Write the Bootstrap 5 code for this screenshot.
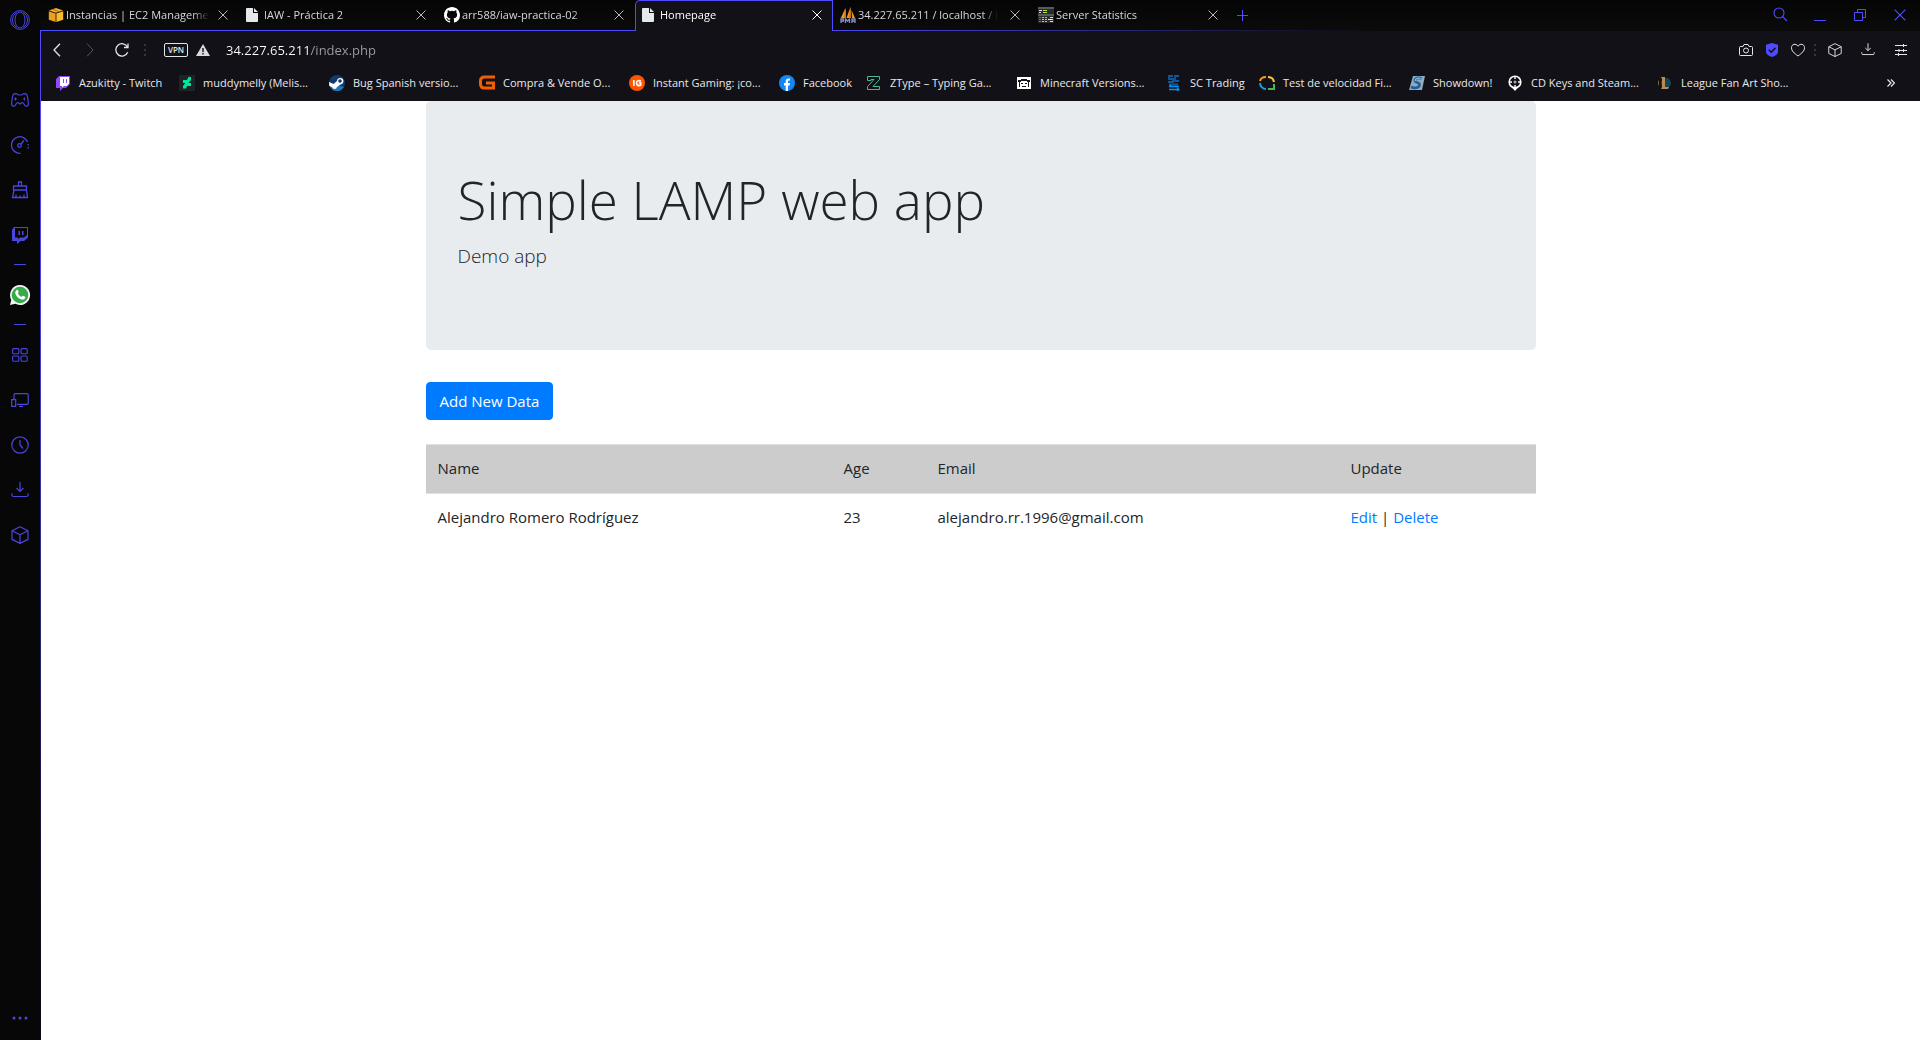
<!DOCTYPE html>
<html lang="es">
<head>
<meta charset="utf-8">
<meta name="viewport" content="width=device-width, initial-scale=1">
<title>Homepage</title>
<link href="https://cdn.jsdelivr.net/npm/bootstrap@5.3.0/dist/css/bootstrap.min.css" rel="stylesheet">
<style>
:root { --line: #4f4bff; --bar: #121117; --dark: #070708; }
body { font-family: "Open Sans", "Noto Sans", sans-serif; font-size: 15px; line-height: 24px; color: #212529; background: #fff; }
svg { display: block; flex: none; }
button.plain { background: none; border: 0; padding: 0; color: inherit; display: flex; align-items: center; justify-content: center; }
.stroke { fill: none; stroke: currentColor; }

/* side bar */
.side { width: 41px; flex: none; background: var(--dark); color: #4a46e0; position: relative; }
.side::after { content: ""; position: absolute; right: 0; top: 30px; bottom: 0; width: 1px; background: linear-gradient(var(--line) 0, #4844e8 250px, #2c2a80 560px, #0a0a14 950px); }
.side .plain, .side a { width: 40px; height: 45px; display: flex; align-items: center; justify-content: center; color: inherit; }
.side .logo { height: 40px; margin-bottom: 37px; }
.side .sep { width: 12px; height: 1px; background: currentColor; margin: 7px 14px; opacity: 1; border: 0; }

/* tabs */
.tabstrip { height: 31px; background: linear-gradient(90deg, var(--line) 0, var(--line) 750px, transparent 1330px) bottom / 100% 1px no-repeat, linear-gradient(#050506, #0b0b0c); color: #d5d6da; }
.tabx { width: 198px; height: 31px; padding: 0 9px 1px 7px; gap: 2px; font-size: 11px; line-height: 16px; }
.tabx a { color: inherit; text-decoration: none; min-width: 0; gap: 2px; }
.tabx .ttl { white-space: nowrap; overflow: hidden; -webkit-mask-image: linear-gradient(90deg, #000 calc(100% - 16px), transparent); mask-image: linear-gradient(90deg, #000 calc(100% - 16px), transparent); }
.tabx .plain { width: 14px; height: 16px; flex: none; color: #b9babd; }
.tabx.on { background: var(--bar); border: 1px solid var(--line); border-bottom: 0; border-top-left-radius: 5px; color: #fff; padding: 0 8px 2px 6px; }
.tabx.on .plain { color: #fff; }
button.newtab { width: 26px; height: 30px; color: var(--line); }
.wins { color: var(--line); height: 30px; padding-right: 8px; gap: 16px; }
.wins .plain { width: 24px; height: 30px; }

/* toolbar and bookmarks */
.tools { background: var(--bar); color: #e4e5e8; height: 39px; padding: 0 3px 2px 3px; }
.tools .plain { height: 30px; flex: none; }
.w34 { width: 34px; } .w26 { width: 26px; } .w32 { width: 32px; }
.tools .dim { color: #55565c; }
.tools .vpn { background: none; color: inherit; border: 1px solid #e4e5e8; border-radius: 2px; width: 24px; height: 14px; flex: none; padding: 0; font-size: 8px; line-height: 12px; text-align: center; font-weight: 600; }
.addr { border: 0; background: linear-gradient(90deg, #fff 84px, #9a9ea8 84px); -webkit-background-clip: text; background-clip: text; color: #fff; -webkit-text-fill-color: transparent; font-size: 13px; line-height: 20px; padding: 0; outline: 0; min-width: 0; }
.marks { background: var(--bar); height: 31px; padding: 0 12px 6px 14px; color: #e8e9eb; font-size: 11px; line-height: 16px; }
.marklist { display: grid; grid-template-columns: 124px repeat(4, 150px) 87px 150px 150px 93px 150px 98px 150px 150px; }
.marklist a { color: inherit; text-decoration: none; display: flex; align-items: center; gap: 8px; white-space: nowrap; }

/* page */
.container { max-width: 1140px; padding-left: 15px; padding-right: 15px; }
.jumbo { background: #e9ecef; border-radius: 5px; padding: 65px 32px 63px; margin-bottom: 32px; }
.jumbo h1 { font-size: 53px; font-weight: 300; line-height: 67px; margin-bottom: 8px; }
.jumbo p { font-size: 19px; font-weight: 300; line-height: 30px; margin-bottom: 16px; }
.btn-add { background: #007bff; border-color: #007bff; color: #fff; font-size: 15px; line-height: 24px; padding: 6px 13px; border-radius: 4px; margin-bottom: 24px; }
.people { table-layout: fixed; width: 100%; }
.people th, .people td { padding: 11px 12px 13px; border-top: 1px solid #dee2e6; font-weight: 400; text-align: left; }
.people thead { background: #ccc; }
.people a { color: #007bff; text-decoration: none; }
.c1 { width: 37%; } .c2 { width: 94px; } .c3 { width: 413px; } .c4 { width: 197px; }
</style>
<script src="https://cdn.jsdelivr.net/npm/bootstrap@5.3.0/dist/js/bootstrap.bundle.min.js"></script>
</head>
<body>
<svg width="0" height="0" class="position-absolute top-0" aria-hidden="true">
  <symbol id="x" viewBox="0 0 10 10"><path class="stroke" d="M.5.5l9 9M9.5.5l-9 9"/></symbol>
  <symbol id="page" viewBox="0 0 12 14"><path fill="#e6e9ec" d="M1 0h6v5h5v8a1 1 0 0 1-1 1H1a1 1 0 0 1-1-1V1a1 1 0 0 1 1-1zM8 0l4 4H8z"/></symbol>
  <symbol id="cube" viewBox="0 0 18 18"><path class="stroke" stroke-width="1.200" stroke-linejoin="round" d="M9 .8l8 4v8.6l-8 4-8-4V4.800zM1 4.800l8 4 8-4M9 8.800v8.600"/></symbol>
  <symbol id="down" viewBox="0 0 18 16"><path class="stroke" stroke-width="1.200" d="M9 0v9.500M5.500 6L9 9.500 12.500 6M1 11.500v1.500a1.500 1.500 0 0 0 1.500 1.500h13a1.500 1.500 0 0 0 1.500-1.500v-1.500"/></symbol>
  <symbol id="grip" viewBox="0 0 2 12"><path fill="#37363d" d="M0 0h2v2H0zM0 5h2v2H0zM0 10h2v2H0z"/></symbol>
</svg>
<div class="d-flex min-vh-100">
  <nav class="side d-flex flex-column" aria-label="Barra lateral">
    <button class="plain logo" aria-label="Opera"><svg width="20" height="20" viewBox="0 0 20 20"><g class="stroke"><circle cx="10" cy="10" r="9.400"/><ellipse cx="10" cy="10" rx="5" ry="8"/><path d="M7 2.500c-6 3-6 12 0 15M13 2.500c6 3 6 12 0 15"/></g></svg></button>
    <button class="plain" aria-label="GX Corner"><svg width="18" height="14" viewBox="0 0 18 14"><path class="stroke" stroke-width="1.200" d="M5 .7c-3 0-3.300 1-3.600 4C1 7 .6 9 .6 11c0 2.600 2.500 2.800 3.600 1.400C5.200 11 5.500 9.500 7 9.500L9 11l2-1.500c1.500 0 1.800 1.500 2.800 2.900 1.100 1.400 3.600 1.200 3.600-1.400 0-2-.4-4-.8-6.300-.3-3-.6-4-3.600-4-1.500 0-1.500 1.300-2.500 1.300h-3C6.500 2 6.500.7 5 .7z"/><path fill="currentColor" d="M4 4.500h1v1h1v1H5v1H4v-1H3v-1h1zM12 5.500h2v1h-2zM13 4.500h1v3h-1z"/></svg></button>
    <button class="plain" aria-label="GX Control"><svg width="18" height="18" viewBox="0 0 18 18"><g class="stroke" stroke-width="1.300"><path d="M9.500 17.300A8.300 8.300 0 1 1 16.500 6"/><path stroke-dasharray="1.500 1.500" d="M17.200 8v6"/><circle cx="8.500" cy="9.500" r="1.800"/><path d="M10 8l3-3.500"/></g></svg></button>
    <button class="plain" aria-label="GX Cleaner"><svg width="18" height="18" viewBox="0 0 18 18"><path class="stroke" stroke-width="1.300" d="M7.500 5V1h3v4M2.500 5h13v4h-13zM3 9l-1.500 7.500h15L15.500 9M5 16.500v-3M9 16.500v-2M13 16.500v-3"/></svg></button>
    <button class="plain" aria-label="Twitch"><svg width="18" height="18" viewBox="0 0 18 18"><path fill="currentColor" fill-rule="evenodd" d="M3 1h14v10.500L13 15h-3.500L6 18v-3H1V4zm1 1v9.500h3v1.800l2-1.800h4l3-2.500V2zM7.500 5H9v4H7.500zM11 5h1.500v4H11z"/></svg></button>
    <hr class="sep">
    <button class="plain" aria-label="WhatsApp"><svg width="20" height="20" viewBox="0 0 20 20"><path fill="#f3f6f3" d="M10 0a10 10 0 1 1-4.700 18.800L0 20l1.300-5.100A10 10 0 0 1 10 0z"/><circle cx="10" cy="10" r="8.300" fill="#35ab49"/><path fill="#fff" d="M6.300 5.200c.8-.9 1.500-.6 1.800.2l.5 1.400c.1.500-.2.800-.8 1.400.9 1.800 2 2.800 3.900 3.700.8-1 1.100-1.300 1.600-1l1.500.7c.8.400.6 1 .3 1.700-.8 1.500-2.900 1.600-4.500.9-2.500-1-4-2.600-5-4.900-.6-1.500-.4-2.900.7-4.100z"/></svg></button>
    <hr class="sep">
    <button class="plain" aria-label="Marcación rápida"><svg width="16" height="14" viewBox="0 0 16 14"><g class="stroke" stroke-width="1.100"><rect x=".6" y=".6" width="6.200" height="5.200" rx="1"/><rect x="9" y=".6" width="6.200" height="5.200" rx="1"/><rect x=".6" y="8" width="6.200" height="5.200" rx="1"/><rect x="9" y="8" width="6.200" height="5.200" rx="1"/></g></svg></button>
    <button class="plain" aria-label="Mi Flow"><svg width="18" height="14" viewBox="0 0 18 14"><path class="stroke" stroke-width="1.200" d="M3 6V2a1.300 1.300 0 0 1 1.300-1.300h11.600A1.300 1.300 0 0 1 17.200 2v8a1.300 1.300 0 0 1-1.300 1.300H6M.7 6.700h4v6.600h-4zM8 13.300h4"/></svg></button>
    <button class="plain" aria-label="Historial"><svg width="18" height="18" viewBox="0 0 18 18"><g class="stroke" stroke-width="1.200"><circle cx="9" cy="9" r="8.200"/><path d="M9 4v5l3 3.500"/></g></svg></button>
    <a href="#" aria-label="Descargas"><svg width="18" height="16"><use href="#down"/></svg></a>
    <button class="plain" aria-label="Extensiones"><svg width="18" height="18"><use href="#cube"/></svg></button>
    <button class="plain mt-auto" aria-label="Más"><svg width="16" height="4" viewBox="0 0 16 4"><g fill="currentColor"><circle cx="2" cy="2" r="1.500"/><circle cx="8" cy="2" r="1.500"/><circle cx="14" cy="2" r="1.500"/></g></svg></button>
  </nav>

  <div class="flex-grow-1">
    <header>
      <div class="tabstrip d-flex">
        <div class="tabx d-flex align-items-center"><a href="#" class="d-flex align-items-center flex-grow-1"><svg width="16" height="16" viewBox="0 0 16 16"><path fill="#f6b02c" d="M8 1l7 2.500-7 2.300L1 3.500z"/><path fill="#e8a020" d="M.8 4.200L7.700 6.500V15L.8 12.800z"/><path fill="#f9b931" d="M8.300 6.500l6.900-2.300v8.600L8.300 15z"/><path stroke="#7d500c" d="M4.500 2.300l7 2.500M8 6v9" stroke-width=".7"/></svg><span class="ttl">Instancias | EC2 Manageme</span></a><button class="plain" aria-label="Cerrar"><svg width="10" height="10"><use href="#x"/></svg></button></div>
        <div class="tabx d-flex align-items-center"><a href="#" class="d-flex align-items-center flex-grow-1"><svg width="16" height="14"><use href="#page" width="12" height="14"/></svg><span class="ttl">IAW - Práctica 2&emsp;&emsp;</span></a><button class="plain" aria-label="Cerrar"><svg width="10" height="10"><use href="#x"/></svg></button></div>
        <div class="tabx d-flex align-items-center"><a href="#" class="d-flex align-items-center flex-grow-1"><svg width="16" height="16" viewBox="0 0 16 16"><path fill="#fff" d="M8 0C3.580 0 0 3.580 0 8c0 3.540 2.290 6.530 5.470 7.590.4.070.55-.17.55-.38 0-.19-.01-.82-.01-1.490-2.010.37-2.530-.49-2.690-.94-.09-.23-.48-.94-.82-1.130-.28-.15-.68-.52-.01-.53.63-.01 1.080.58 1.230.82.720 1.210 1.870.87 2.330.66.070-.52.280-.87.510-1.070-1.780-.2-3.640-.89-3.640-3.950 0-.87.310-1.590.82-2.150-.08-.2-.36-1.020.080-2.120 0 0 .67-.21 2.200.82a7.600 7.600 0 0 1 4 0c1.530-1.040 2.200-.82 2.200-.82.440 1.100.160 1.920.080 2.120.510.560.820 1.270.820 2.150 0 3.070-1.870 3.750-3.650 3.950.290.250.540.730.540 1.480 0 1.070-.010 1.930-.010 2.200 0 .210.150.460.550.380A8 8 0 0 0 16 8c0-4.420-3.580-8-8-8z"/></svg><span class="ttl">arr588/iaw-practica-02&emsp;</span></a><button class="plain" aria-label="Cerrar"><svg width="10" height="10"><use href="#x"/></svg></button></div>
        <div class="tabx on d-flex align-items-center"><a href="#" class="d-flex align-items-center flex-grow-1"><svg width="16" height="14"><use href="#page" width="12" height="14"/></svg><span class="ttl">Homepage&emsp;&emsp;</span></a><button class="plain" aria-label="Cerrar"><svg width="10" height="10"><use href="#x"/></svg></button></div>
        <div class="tabx d-flex align-items-center"><a href="#" class="d-flex align-items-center flex-grow-1"><svg width="16" height="16" viewBox="0 0 16 16"><path fill="#f7941d" d="M5.500 1L6 11H.8zM10.500 0l.5 11H6.500zM11.500 3l3.500 8h-3z"/><path fill="#c9731b" d="M5.500 1L6 11H4zM10.500 0l.5 11H9z"/><path fill="none" stroke="#8a8ec0" stroke-width="1.300" d="M1 16v-4h2.500v2H1M5.500 16v-4L7.500 14l2-2v4M12 16v-4h3v4M12 14h3"/></svg><span class="ttl">34.227.65.211 / localhost / l</span></a><button class="plain" aria-label="Cerrar"><svg width="10" height="10"><use href="#x"/></svg></button></div>
        <div class="tabx d-flex align-items-center"><a href="#" class="d-flex align-items-center flex-grow-1"><svg width="16" height="16" viewBox="0 0 16 16"><path fill="#2b2b2b" d="M0 0h16v16H0z"/><path fill="#5a5a5a" d="M0 0h16v2H0zM0 7h16v2H0z"/><path fill="#ddd" d="M1 3h3v1H1zM1 5h2v1H1zM12 10h3v1h-3zM10 12h5v1h-5zM12 14h3v1h-3z"/><path fill="#a6e22e" d="M5 3h4v1H5zM5 5h4v1H5zM4 10h2v1H4zM4 12h2v1H4zM4 14h2v1H4z"/><path fill="#f92672" d="M1 10h2v1H1zM1 12h2v1H1zM1 14h2v1H1z"/><path fill="#66d9ef" d="M7 10h2v1H7zM7 12h2v1H7zM7 14h2v1H7z"/></svg><span class="ttl">Server Statistics&emsp;&emsp;</span></a><button class="plain" aria-label="Cerrar"><svg width="10" height="10"><use href="#x"/></svg></button></div>
        <button class="plain newtab" aria-label="Nueva pestaña"><svg width="11" height="11" viewBox="0 0 11 11"><path class="stroke" d="M5.500 0v11M0 5.500h11"/></svg></button>
        <div class="wins d-flex ms-auto">
          <button class="plain" aria-label="Buscar"><svg width="16" height="16" viewBox="0 0 16 16"><g class="stroke" stroke-width="1.100"><circle cx="7" cy="6" r="5"/><path d="M10.500 9.500l4.500 4.500"/></g></svg></button>
          <button class="plain" aria-label="Minimizar"><svg width="12" height="12" viewBox="0 0 12 12"><path class="stroke" d="M0 11.500h12"/></svg></button>
          <button class="plain" aria-label="Restaurar"><svg width="12" height="12" viewBox="0 0 12 12"><path class="stroke" d="M.5 3.500h8v8h-8zM3.500 3.500v-3h8v8h-3"/></svg></button>
          <button class="plain" aria-label="Cerrar ventana"><svg width="12" height="12"><use href="#x"/></svg></button>
        </div>
      </div>

      <div class="tools d-flex align-items-center">
        <button class="plain w26" aria-label="Atrás"><svg width="8" height="14" viewBox="0 0 8 14"><path class="stroke" stroke-width="1.300" d="M7 .7L1 7l6 6.300"/></svg></button>
        <button class="plain w32 ms-1 dim" aria-label="Adelante"><svg width="8" height="14" viewBox="0 0 8 14"><path class="stroke" d="M1 .7L7 7l-6 6.300"/></svg></button>
        <button class="plain w32" aria-label="Recargar"><svg width="14" height="14" viewBox="0 0 14 14"><path class="stroke" stroke-width="1.300" d="M12.700 9.300A6.200 6.200 0 1 1 12.500 4M13 .5v4H9"/></svg></button>
        <svg width="18" height="12"><use href="#grip" width="2" height="12" x="6"/></svg>
        <button class="vpn ms-2 me-2">VPN</button>
        <svg width="14" height="12" viewBox="0 0 14 12"><path fill="#d9dbdf" d="M7 0l7 12H0z"/><path fill="#121117" d="M6.300 4h1.400v4H6.300zM6.300 9h1.400v1.400H6.300z"/></svg>
        <input class="addr flex-grow-1 ms-3" type="text" aria-label="Dirección" value="34.227.65.211/index.php">
        <button class="plain w26" aria-label="Captura"><svg width="14" height="14" viewBox="0 0 14 14"><g class="stroke"><path d="M1.500 3.500H4l1-2h4l1 2h2.500a1 1 0 0 1 1 1v7a1 1 0 0 1-1 1h-11a1 1 0 0 1-1-1v-7a1 1 0 0 1 1-1z"/><circle cx="7" cy="7.500" r="2.500"/></g></svg></button>
        <button class="plain w26" aria-label="Bloqueador"><svg width="12" height="14" viewBox="0 0 12 14"><path fill="#4f4bff" d="M6 0l6 1.800v6.700C12 11.500 9 13 6 14 3 13 0 11.500 0 8.500V1.800z"/><path fill="none" stroke="#121117" stroke-width="1.600" d="M2.800 6.800l2.400 2.400 4.200-4.300"/></svg></button>
        <button class="plain w26" aria-label="Favoritos"><svg width="14" height="14" viewBox="0 0 14 14"><path class="stroke" d="M7 13C3 10 .5 8 .5 4.700.5 1 5 0 7 3.200 9 0 13.500 1 13.500 4.700 13.500 8 11 10 7 13z"/></svg></button>
        <svg width="8" height="12"><use href="#grip" width="2" height="12" x="3"/></svg>
        <button class="plain w32" aria-label="Extensiones"><svg width="14" height="14"><use href="#cube"/></svg></button>
        <button class="plain w34" aria-label="Descargas"><svg width="14" height="13"><use href="#down"/></svg></button>
        <button class="plain w32" aria-label="Configuración"><svg width="12" height="12" viewBox="0 0 12 12"><path class="stroke" d="M0 1.500h12M0 6.500h12M0 10.500h12M8.500 0v3M4 5v3M8.500 5v3M3.500 9v3"/></svg></button>
      </div>

      <nav class="marks d-flex align-items-center" aria-label="Marcadores">
        <div class="marklist">
          <a href="#"><svg width="16" height="16" viewBox="0 0 16 16"><path fill="#9146ff" d="M4 1h11v8l-4 4H8l-3 3v-3H1V4z"/><path fill="#fff" d="M5 2h9v6.500L12 11H9l-2 1.500V11H5z"/><path fill="#9146ff" d="M8 4h1v4H8zM11 4h1v4h-1z"/></svg>Azukitty - Twitch</a>
          <a href="#"><svg width="16" height="16" viewBox="0 0 16 16"><path fill="#1d2428" d="M0 0h16v16H0z"/><path fill="#00e59b" d="M12 2v3L9.500 8H12v3H8l-1 2.500H4V11l2.500-3H4V5h4l1.500-3z"/></svg>muddymelly (Melis...</a>
          <a href="#"><svg width="16" height="16" viewBox="0 0 16 16"><circle cx="8" cy="8" r="8" fill="#123a70"/><path fill="#1a78b8" d="M1 12a8 8 0 0 0 14 0l-7-2z"/><path fill="#fff" d="M0 7l4.500 2L8 6a3.200 3.200 0 1 1 3.500 3.400L8 12a2.500 2.500 0 0 1-4.800.3L.3 11z"/><circle cx="11" cy="6" r="1.800" fill="#123a70"/></svg>Bug Spanish versio...</a>
          <a href="#"><svg width="16" height="16" viewBox="0 0 16 16"><path fill="none" stroke="#f05f00" stroke-width="3" d="M16 2H5.500Q1.500 2 1.500 6v3q0 4 4 4h9V8H7"/></svg>Compra &amp; Vende O...</a>
          <a href="#"><svg width="16" height="16" viewBox="0 0 16 16"><circle cx="8" cy="8" r="8" fill="#ff5400"/><path fill="none" stroke="#fff" stroke-width="1.700" d="M4.800 5v6M12 6.300C10 5 7.500 5.500 7.500 8s2.500 3.200 4.200 2V8H9.800"/></svg>Instant Gaming: ¡co...</a>
          <a href="#"><svg width="16" height="16" viewBox="0 0 16 16"><circle cx="8" cy="8" r="8" fill="#1388f5"/><path fill="#fff" d="M6.700 16v-5.500H5V8h1.700V6.500C6.700 4.200 8 3 11 3.500v2C9.400 5.300 9 5.700 9 6.700V8h2l-.4 2.500H9V16z"/></svg>Facebook</a>
          <a href="#"><svg width="16" height="16" viewBox="0 0 16 16"><path fill="none" stroke="#4cb892" d="M1.500 1.500h12v3L7 11.500h6.500v3h-12v-3l6.500-7H5v1H1.500z"/></svg>ZType – Typing Ga...</a>
          <a href="#"><svg width="16" height="16" viewBox="0 0 16 16"><path fill="#fff" d="M1 2h14v12H1z"/><path fill="#16151a" d="M2 5h3V4h6v1h3v2h-1v5h-1V7h-1V6H5v1H4v5H3V7H2zM5 8h2v1H5zM9 8h2v1H9zM6 11h4v1H6z"/></svg>Minecraft Versions...</a>
          <a href="#"><svg width="16" height="16" viewBox="0 0 16 16"><path fill="none" stroke="#135795" stroke-width="1.800" d="M7 1H3v3h4v3H2M13 1H9v5h4M3 9.500h9"/><path fill="none" stroke="#0792ee" stroke-width="1.300" d="M3 11.500h10M3 14.500h10M5 10l-2 1.500M11 13l2 1.500-2 1.500"/></svg>SC Trading</a>
          <a href="#"><svg width="16" height="16" viewBox="0 0 16 16"><g fill="none" stroke-width="2"><path stroke="#f49b20" d="M1 6c.5-2 2.500-4 6-4"/><path stroke="#f7c53a" d="M9 2c3 0 5.500 2 6 5"/><path stroke="#249ad6" d="M1 8c0 3 2.500 6 6 6"/><path stroke="#48b660" d="M9 14h6V9"/></g></svg>Test de velocidad Fi...</a>
          <a href="#"><svg width="16" height="16" viewBox="0 0 16 16"><path fill="#8fa9bd" d="M4 1h12l-3 14H0z"/><path fill="none" stroke="#235f99" stroke-width="2.600" d="M12.500 3.500C9 2 5 3.500 6 6s5 1 4.500 4-5 3.500-8.500 2"/><path fill="none" stroke="#79bce8" stroke-width="1.200" d="M12 3.500C9 2.500 5.500 3.500 6.500 6"/></svg>Showdown!</a>
          <a href="#"><svg width="16" height="16" viewBox="0 0 16 16"><circle cx="8" cy="7" r="5.800" fill="none" stroke="#fff" stroke-width="1.600"/><path fill="#fff" d="M5 12.500h6L8 16zM7.300 1h1.400v3H7.300zM7.300 10h1.400v3H7.300zM2 6.300h3v1.400H2zM11 6.300h3v1.400h-3z"/><circle cx="8" cy="7" r="1.500" fill="#aaa"/></svg>CD Keys and Steam...</a>
          <a href="#"><svg width="16" height="16" viewBox="0 0 16 16"><circle cx="9" cy="8" r="5" fill="#154452"/><path fill="#b78d54" d="M4 2h4v10h4l-1 2H4l1-2V4zM2 5c-1 2-1 4 0 6z"/></svg>League Fan Art Sho...</a>
        </div>
        <button class="plain w34 ms-auto" aria-label="Más marcadores"><svg width="8" height="8" viewBox="0 0 8 8"><path class="stroke" stroke-width="1.200" d="M.5.500L4 4 .5 7.500M4 .5L7.500 4 4 7.500"/></svg></button>
      </nav>
    </header>

    <main class="container">
      <div class="jumbo">
        <h1>Simple LAMP web app</h1>
        <p>Demo app</p>
      </div>
      <a href="#" class="btn btn-add">Add New Data</a>
      <table class="people">
        <colgroup><col class="c1"><col class="c2"><col class="c3"><col class="c4"></colgroup>
        <thead><tr><th scope="col">Name</th><th scope="col">Age</th><th scope="col">Email</th><th scope="col">Update</th></tr></thead>
        <tbody><tr><td>Alejandro Romero Rodríguez</td><td>23</td><td>alejandro.rr.1996@gmail.com</td><td><a href="#">Edit</a> | <a href="#">Delete</a></td></tr></tbody>
      </table>
    </main>
  </div>
</div>
</body>
</html>
